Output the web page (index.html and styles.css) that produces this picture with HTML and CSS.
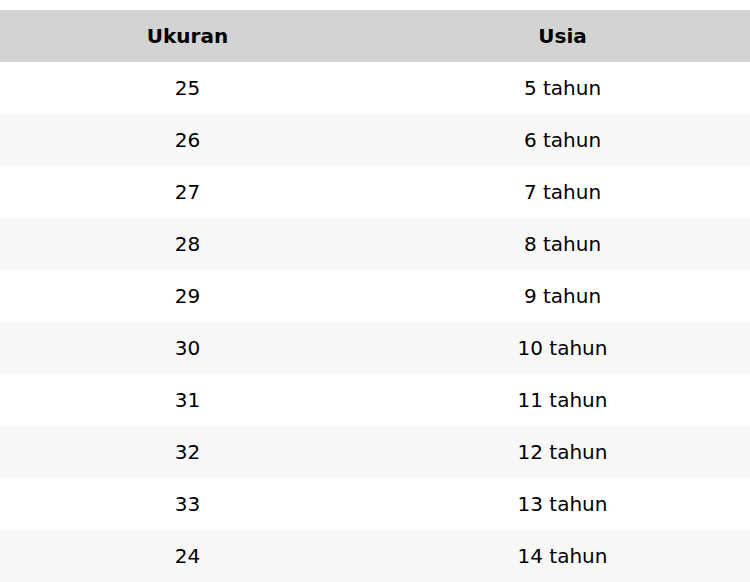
FILE: index.html
```html
<!DOCTYPE html>
<html>
<head>
<meta charset="utf-8">
<link rel="stylesheet" href="styles.css">
</head>
<body>
<table class="size-table">
  <thead>
    <tr><th>Ukuran</th><th>Usia</th></tr>
  </thead>
  <tbody>
    <tr><td>25</td><td>5 tahun</td></tr>
    <tr><td>26</td><td>6 tahun</td></tr>
    <tr><td>27</td><td>7 tahun</td></tr>
    <tr><td>28</td><td>8 tahun</td></tr>
    <tr><td>29</td><td>9 tahun</td></tr>
    <tr><td>30</td><td>10 tahun</td></tr>
    <tr><td>31</td><td>11 tahun</td></tr>
    <tr><td>32</td><td>12 tahun</td></tr>
    <tr><td>33</td><td>13 tahun</td></tr>
    <tr><td>24</td><td>14 tahun</td></tr>
  </tbody>
</table>
</body>
</html>
```
FILE: styles.css
```css
html, body {
  margin: 0;
  padding: 0;
  background: #ffffff;
}
body {
  padding-top: 10px;
  font-family: "DejaVu Sans", sans-serif;
  color: #000;
}
.size-table {
  width: 100%;
  border-collapse: collapse;
  table-layout: fixed;
  font-size: 20px;
}
.size-table th,
.size-table td {
  height: 52px;
  padding: 0 8px;
  text-align: center;
  vertical-align: middle;
  box-sizing: border-box;
}
.size-table th {
  background: #d3d3d3;
  font-weight: bold;
}
.size-table tbody tr:nth-child(even) {
  background: #f8f8f8;
}
```
